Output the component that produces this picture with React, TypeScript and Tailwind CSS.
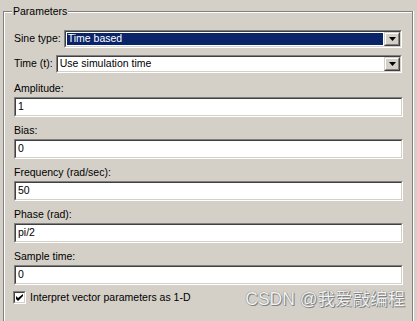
import React from 'react';

const sunken = 'border-t border-l border-b border-r border-t-[#808080] border-l-[#808080] border-b-white border-r-white';
const sunkenInner = 'border-t border-l border-b border-r border-t-[#404040] border-l-[#404040] border-b-[#d4d0c8] border-r-[#d4d0c8]';

const DropButton: React.FC = () => (
  <div className="w-[16px] h-full border-t border-l border-b border-r border-t-[#d4d0c8] border-l-[#d4d0c8] border-b-[#404040] border-r-[#404040]">
    <div className="w-full h-full bg-[#d4d0c8] border-t border-l border-b border-r border-t-white border-l-white border-b-[#808080] border-r-[#808080] flex items-center justify-center">
      <svg width="7" height="4" viewBox="0 0 7 4">
        <path d="M0 0h7L3.5 4z" fill="#000" />
      </svg>
    </div>
  </div>
);

interface ComboProps {
  label: string;
  value: string;
  selected?: boolean;
}

const ComboRow: React.FC<ComboProps> = ({ label, value, selected }) => (
  <div className="flex items-center gap-[3px] h-[18px] mr-[1px]">
    <span className="whitespace-nowrap">{label}</span>
    <div className={`flex-1 h-full ${sunken}`}>
      <div className={`h-full flex bg-white ${sunkenInner}`}>
        <div className="flex-1 p-[1px]">
          <div
            className={
              selected
                ? 'h-full bg-[#0a246a] text-white pl-[1px] flex items-center'
                : 'h-full pl-[1px] flex items-center'
            }
          >
            {value}
          </div>
        </div>
        <DropButton />
      </div>
    </div>
  </div>
);

interface FieldProps {
  label: string;
  value: string;
}

const Field: React.FC<FieldProps> = ({ label, value }) => (
  <div>
    <div className="h-[22px] pt-[7px] leading-[13px]">{label}</div>
    <div className={`h-[20px] ${sunken}`}>
      <div className={`h-full bg-white pl-[2px] flex items-center ${sunkenInner}`}>{value}</div>
    </div>
  </div>
);

export default function App() {
  return (
    <div className="w-[417px] h-[321px] overflow-hidden bg-[#d4d0c8] relative text-[10.5px] text-black font-['Liberation_Sans',Arial,sans-serif]">
      <div className="ml-[3px] mr-[4px] mt-[11px] h-[320px] relative border-t border-l border-r border-[#808080] shadow-[inset_1px_1px_0_#fff,1px_0_0_#fff]">
        <span className="absolute left-[8px] -top-[7px] bg-[#d4d0c8] px-[1px] leading-[13px]">Parameters</span>
        <div className="pl-[10px] pr-[9px] pt-[18px] flex flex-col">
          <div className="flex flex-col gap-[7px]">
            <ComboRow label="Sine type:" value="Time based" selected />
            <ComboRow label="Time (t):" value="Use simulation time" />
          </div>
          <div className="mt-[2px]">
            <Field label="Amplitude:" value="1" />
            <Field label="Bias:" value="0" />
            <Field label="Frequency (rad/sec):" value="50" />
            <Field label="Phase (rad):" value="pi/2" />
            <Field label="Sample time:" value="0" />
          </div>
          <div className="mt-[6px] flex items-center gap-[4px] -ml-[1px]">
            <div className={`w-[13px] h-[13px] ${sunken}`}>
              <div className={`w-full h-full bg-white flex items-center justify-center ${sunkenInner}`}>
                <svg width="7" height="7" viewBox="0 0 7 7">
                  <path d="M0 2v3l2 2 5-5V-0L2 4z" fill="#000" />
                </svg>
              </div>
            </div>
            <span className="leading-[13px]">Interpret vector parameters as 1-D</span>
          </div>
        </div>
      </div>
      <div className="absolute right-[12px] bottom-[12px] text-[17.5px] leading-[19px] text-[#f2f2f2] [text-shadow:0_0_1px_#555,1px_1px_0_#888] font-['Liberation_Sans','Noto_Sans_CJK_SC',sans-serif] whitespace-nowrap">
        CSDN @我爱敲编程
      </div>
    </div>
  );
}
